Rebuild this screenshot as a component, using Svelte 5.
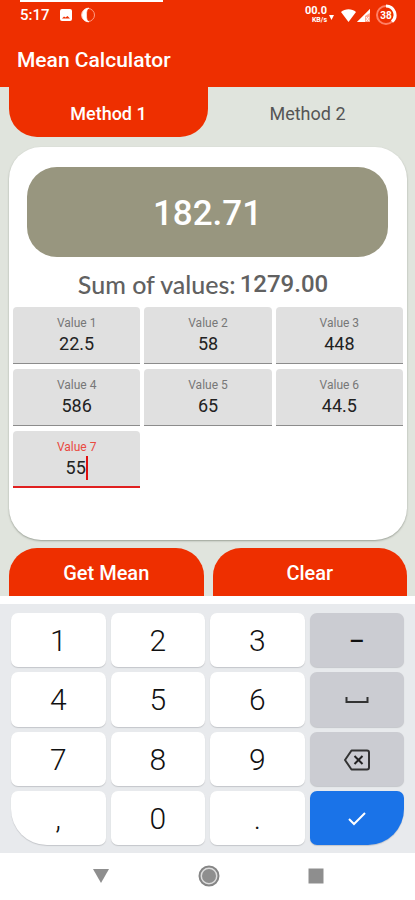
<script>
  let values = $state(['22.5', '58', '448', '586', '65', '44.5', '55']);
  let active = $state(6);
  let tab = $state(0);
  let sum = $derived(values.reduce((total, v) => total + (parseFloat(v) || 0), 0));
  let mean = $derived(sum / values.length);

  const tabs = ['Method 1', 'Method 2'];
  const keys = ['1', '2', '3', '–', '4', '5', '6', 'space', '7', '8', '9', 'delete', ',', '0', '.', 'done'];

  function press(key) {
    if (key === 'done') return;
    if (key === 'delete') values[active] = values[active].slice(0, -1);
    else if (key === 'space') values[active] += ' ';
    else values[active] += key === '–' ? '-' : key;
  }

  function clearAll() {
    values = values.map(() => '');
  }
</script>

<div class="screen">
  <header>
    <div class="strip"></div>
    <div class="status">
      <span class="clock">5:17</span>
      <svg class="photo" width="12" height="12" viewBox="0 0 12 12" aria-hidden="true">
        <rect width="12" height="12" rx="2" fill="#fff" />
        <path d="M2 9.500 4 7.500l1.500 1L7.500 7 10 9.500z" fill="#ee2f00" />
      </svg>
      <svg class="moon" width="16" height="16" viewBox="0 0 16 16" aria-hidden="true">
        <circle cx="8" cy="8" r="6.500" fill="none" stroke="#ff9c85" />
        <path d="M9 1a7 7 0 1 0 0 14C7 13.500 6.500 12 6.500 8S7 2.500 9 1z" fill="#fff" stroke="#fff" stroke-width=".6" />
      </svg>
      <span class="rate"><span>00.0</span><small>KB/s</small></span>
      <svg class="down" width="6" height="6" viewBox="0 0 6 6" aria-hidden="true"><path d="M0 0h5L2.500 5z" fill="#fff" /></svg>
      <svg class="wifi" width="15" height="13" viewBox="0 0 15 13" aria-hidden="true">
        <path d="M0 3C4-.6 11-.6 15 3L7.500 13z" fill="#fff" />
      </svg>
      <svg class="signal" width="14" height="13" viewBox="0 0 14 13" aria-hidden="true">
        <path d="M0 13 13 0v13z" fill="#ffa994" />
        <path d="M0 13 13 0v4L8 7v6z" fill="#fff" />
        <path d="m9 8 3 4m0-4-3 4" stroke="#fff" fill="none" />
      </svg>
      <span class="battery">
        <svg width="22" height="22" viewBox="0 0 22 22" aria-hidden="true">
          <circle cx="11" cy="11" r="9" fill="none" stroke="#ff8065" stroke-width="2" />
          <path d="M11 2a9 9 0 0 1 6 15.700" fill="none" stroke="#fff" stroke-width="3" />
        </svg>
        <b>38</b>
      </span>
    </div>
    <h1>Mean Calculator</h1>
  </header>

  <nav>
    {#each tabs as name, i}
      <button class="tab" class:selected={tab === i} onclick={() => (tab = i)}>{name}</button>
    {/each}
  </nav>

  <main>
    <output class="mean">{mean.toFixed(2)}</output>
    <p class="sum"><span>Sum of values:</span> <b>{sum.toFixed(2)}</b></p>
    <div class="fields">
      {#each values as _, i}
        <label class="field" class:active={active === i}>
          <span>Value {i + 1}</span>
          <div class="entry">
            <input inputmode="none" size="1" style:width="{Math.max(values[i].length, 1)}ch" bind:value={values[i]} onfocus={() => (active = i)} />
            {#if active === i}<i class="caret"></i>{/if}
          </div>
        </label>
      {/each}
    </div>
  </main>

  <div class="actions">
    <button>Get Mean</button>
    <button onclick={clearAll}>Clear</button>
  </div>

  <div class="keyboard">
    {#each keys as key, i}
      <button class="key" class:side={i % 4 === 3} class:comma={key === ','} class:done={key === 'done'} aria-label={key} onclick={() => press(key)}>
        {#if key === 'space'}
          <svg width="24" height="8" viewBox="0 0 24 8"><path d="M1.500 1v5h21V1" fill="none" stroke="#333" stroke-width="2" /></svg>
        {:else if key === 'delete'}
          <svg width="28" height="22" viewBox="0 0 28 22">
            <path d="M8.500 1.500H24Q26 1.500 26 3.500v15Q26 20.500 24 20.500H8.500L2 11z" fill="none" stroke="#333" stroke-width="2" stroke-linejoin="round" />
            <path d="m11.500 7 8 8m0-8-8 8" stroke="#222" stroke-width="2" />
          </svg>
        {:else if key === 'done'}
          <svg width="20" height="16" viewBox="0 0 20 16"><path d="m2 8 5 5L18 2" fill="none" stroke="#fff" stroke-width="2" /></svg>
        {:else}
          {key}
        {/if}
      </button>
    {/each}
  </div>

  <footer>
    <button aria-label="Hide keyboard"><svg width="18" height="16" viewBox="0 0 18 16"><path d="M1 1h16L9 15z" fill="#8e8e8e" /></svg></button>
    <button aria-label="Home">
      <svg width="22" height="22" viewBox="0 0 22 22">
        <circle cx="11" cy="11" r="9.500" fill="#ddd" stroke="#858585" stroke-width="2" />
        <circle cx="11" cy="11" r="7" fill="#8e8e8e" />
      </svg>
    </button>
    <button aria-label="Recent apps"><svg width="16" height="16" viewBox="0 0 16 16"><path d="M.5.5h15v15H.5z" fill="#8e8e8e" /></svg></button>
  </footer>
</div>

<style>
  :global(body) {
    margin: 0;
    background: #fff;
  }
  .screen {
    display: flex;
    flex-direction: column;
    min-height: 100vh;
    background: #e0e4dd;
    font-family: Roboto, "Liberation Sans", sans-serif;
  }
  button {
    border: 0;
    padding: 0;
    font-family: inherit;
    cursor: pointer;
  }
  header {
    height: 87px;
    background: #ee2f00;
    color: #fff;
  }
  .strip {
    width: 143px;
    height: 2px;
    margin-left: 20px;
    background: #fff;
  }
  .status {
    display: flex;
    align-items: center;
    height: 26px;
    padding: 0 18px 0 20px;
  }
  .clock {
    font-size: 15px;
    font-weight: 500;
    width: 40px;
  }
  .moon {
    margin-left: 8px;
  }
  .rate {
    display: flex;
    flex-direction: column;
    align-items: flex-end;
    margin-left: auto;
    font-size: 11px;
    line-height: 10px;
    font-weight: 700;
  }
  .rate small {
    font-size: 7px;
    line-height: 8px;
  }
  .down {
    margin: 6px 6px 0 2px;
  }
  .signal {
    margin: 0 4px 0 1px;
  }
  .battery {
    display: grid;
    place-items: center;
  }
  .battery > * {
    grid-area: 1 / 1;
  }
  .battery b {
    font-size: 10px;
  }
  h1 {
    margin: 0;
    padding: 20px 17px 0;
    font-size: 21px;
    line-height: 24px;
    font-weight: 500;
  }
  nav {
    display: grid;
    grid-template-columns: 1fr 1fr;
    padding: 0 8px 0 9px;
  }
  .tab {
    height: 50px;
    padding-top: 2px;
    border-radius: 0 0 28px 28px;
    background: transparent;
    color: #555;
    font-size: 18px;
  }
  .tab.selected {
    background: #ee2f00;
    color: #fff;
    font-weight: 500;
  }
  main {
    flex: 1;
    margin: 10px 8px 8px 9px;
    padding: 20px 4px 0;
    border-radius: 32px;
    background: #fff;
    box-shadow: 0 1px 2px #9aa096;
  }
  .mean {
    display: grid;
    place-items: center;
    box-sizing: border-box;
    height: 90px;
    margin: 0 15px 0 14px;
    padding-top: 4px;
    border-radius: 30px;
    background: #98967f;
    color: #fff;
    font-size: 35px;
    font-weight: 500;
    line-height: 40px;
  }
  .sum {
    display: flex;
    justify-content: center;
    align-items: center;
    gap: 4px;
    box-sizing: border-box;
    height: 50px;
    margin: 0;
    padding: 4px 10px 0 0;
    color: #616161;
    font-size: 24px;
    line-height: 30px;
  }
  .sum span {
    font-family: Lato, sans-serif;
    font-size: 25px;
    font-weight: 500;
  }
  .sum b {
    font-weight: 500;
  }
  .fields {
    display: grid;
    grid-template-columns: repeat(3, 1fr);
    gap: 5px 4px;
  }
  .field {
    display: flex;
    flex-direction: column;
    align-items: center;
    box-sizing: border-box;
    height: 57px;
    padding-top: 9px;
    border-bottom: 1px solid #8c8c8c;
    border-radius: 4px 4px 0 0;
    background: #e0e0e0;
    color: #777;
    font-size: 12px;
    line-height: 15px;
  }
  .field.active {
    border-bottom: 2px solid #e02020;
    color: #e94a40;
  }
  .entry {
    display: flex;
    align-items: center;
    height: 25px;
  }
  .entry input {
    box-sizing: content-box;
    height: 24px;
    padding: 0;
    border: 0;
    outline: 0;
    background: transparent;
    color: #222;
    font: 18px Roboto, sans-serif;
    text-align: center;
  }
  .caret {
    width: 2px;
    height: 24px;
    background: #e01010;
  }
  .actions {
    display: grid;
    grid-template-columns: 1fr 1fr;
    gap: 9px;
    padding: 0 8px 0 9px;
    border-bottom: 8px solid #fff;
  }
  .actions button {
    height: 48px;
    padding-top: 2px;
    border-radius: 28px 28px 0 0;
    background: #ee2f00;
    color: #fff;
    font-size: 20px;
    font-weight: 500;
  }
  .keyboard {
    display: grid;
    grid-template-columns: repeat(4, 1fr);
    grid-auto-rows: 1fr;
    gap: 5px;
    box-sizing: border-box;
    height: 249px;
    padding: 9px 11px 8px;
    background: #e8eaed;
  }
  .key {
    display: grid;
    place-items: center;
    padding-top: 2px;
    border-radius: 7px;
    background: #fff;
    box-shadow: 0 1px 1px #c4c6ca;
    color: #111;
    font-size: 30px;
    font-weight: 300;
    line-height: 36px;
  }
  .key.side {
    background: #cbccd2;
    font-size: 24px;
    font-weight: 500;
  }
  .key.comma {
    border-bottom-left-radius: 36px;
  }
  .key.done {
    background: #1a73e8;
    border-bottom-right-radius: 36px;
  }
  footer {
    display: flex;
    justify-content: center;
    gap: 88px;
    height: 47px;
    background: #fff;
  }
  footer button {
    display: grid;
    place-items: center;
    height: 46px;
    background: transparent;
  }
</style>
